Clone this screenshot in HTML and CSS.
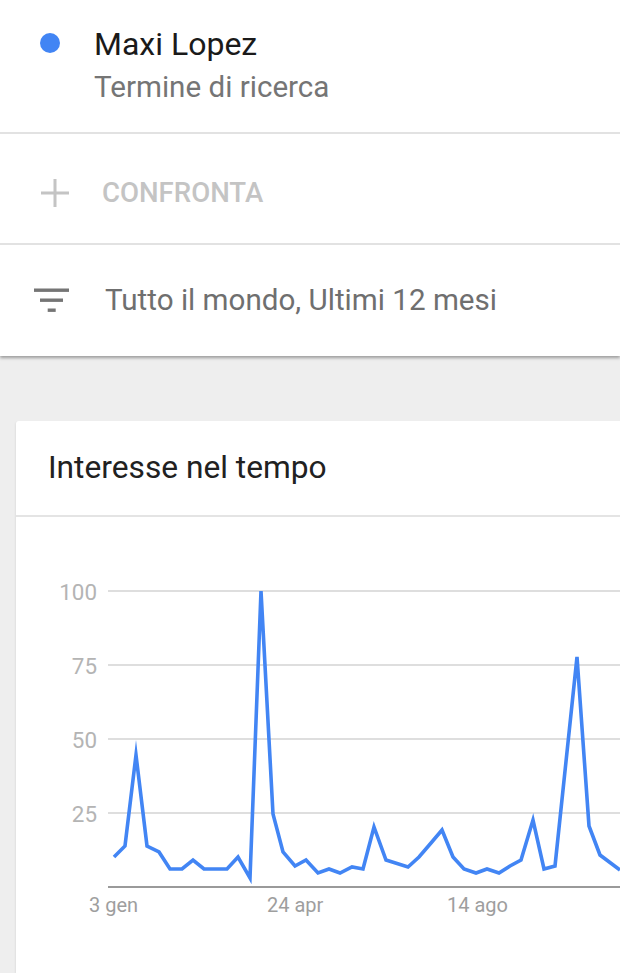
FILE: index.html
```html
<!DOCTYPE html>
<html lang="it">
<head>
<meta charset="utf-8">
<title>Maxi Lopez - Interesse nel tempo</title>
<link rel="stylesheet" href="styles.css">
</head>
<body>
<header class="panel">
  <div class="row term">
    <span class="dot"></span>
    <div class="term-text">
      <div class="term-name">Maxi Lopez</div>
      <div class="term-type">Termine di ricerca</div>
    </div>
  </div>
  <div class="row compare">
    <svg class="plus" width="28" height="28" viewBox="0 0 28 28"><rect x="12.5" y="0" width="3" height="28"/><rect x="0" y="12.5" width="28" height="3"/></svg>
    <span class="compare-label">CONFRONTA</span>
  </div>
  <div class="row filter">
    <svg class="filter-icon" width="36" height="24" viewBox="0 0 36 24"><rect x="0" y="0.5" width="35" height="3.4"/><rect x="6" y="10.5" width="23" height="3.4"/><rect x="13.7" y="20.5" width="8" height="3.4"/></svg>
    <span class="filter-label">Tutto il mondo, Ultimi 12 mesi</span>
  </div>
</header>
<main class="content">
  <section class="card">
    <h2 class="card-title">Interesse nel tempo</h2>
    <div class="chart">
      <svg class="chart-svg" width="604" height="456" viewBox="0 0 604 456">
        <g class="grid">
          <line x1="92" y1="74" x2="604" y2="74"/>
          <line x1="92" y1="148" x2="604" y2="148"/>
          <line x1="92" y1="222" x2="604" y2="222"/>
          <line x1="92" y1="296" x2="604" y2="296"/>
        </g>
        <line class="axis" x1="92" y1="370" x2="604" y2="370"/>
        <g class="ylabels">
          <text x="81" y="83">100</text>
          <text x="81" y="157">75</text>
          <text x="81" y="231">50</text>
          <text x="81" y="305">25</text>
        </g>
        <g class="xlabels">
          <text x="73" y="395">3 gen</text>
          <text x="251" y="395">24 apr</text>
          <text x="431" y="395">14 ago</text>
        </g>
        <polyline class="series" points="98,340 109,329 120,238 131,329 143,335 154,352 166,352 177,343 188,352 199,352 211,352 222,340 234,361 245,74 257,297 267,335 279,349 290,343 302,356 313,352 324,356 336,350 347,352 358,310 370,343 392,350 403,340 415,326 426,313 437,340 448,352 460,356 471,352 483,356 494,349 505,343 517,303 528,352 539,349 561,140 573,309 584,338 604,353"/>
      </svg>
    </div>
  </section>
</main>
</body>
</html>
```
FILE: styles.css
```css
html, body {
  margin: 0;
  padding: 0;
  overflow: hidden;
}
body {
  background: #eeeeee;
  font-family: Roboto, "Noto Sans", "Liberation Sans", sans-serif;
  width: 620px;
  height: 973px;
}
.panel {
  background: #ffffff;
  box-shadow: 0 2px 3px rgba(0, 0, 0, 0.35);
  position: relative;
  z-index: 1;
}
.row {
  display: flex;
  align-items: flex-start;
  box-sizing: border-box;
}
.term {
  height: 134px;
  padding-top: 24px;
  border-bottom: 2px solid #e2e2e2;
}
.dot {
  width: 20px;
  height: 20px;
  border-radius: 50%;
  background: #4285f4;
  margin-left: 40px;
  margin-top: 9px;
  flex: none;
}
.term-text {
  margin-left: 34px;
}
.term-name {
  font-size: 32px;
  line-height: 40px;
  color: #1a1a1a;
}
.term-type {
  font-size: 29.6px;
  line-height: 38px;
  margin-top: 4px;
  color: #757575;
}
.compare {
  height: 111px;
  padding-top: 43px;
  border-bottom: 2px solid #e2e2e2;
}
.plus {
  fill: #c4c4c4;
  margin-left: 41px;
  margin-top: 2px;
  flex: none;
}
.compare-label {
  margin-left: 33px;
  font-size: 27.6px;
  font-weight: 500;
  line-height: 32px;
  color: #c4c4c4;
}
.filter {
  height: 111px;
  padding-top: 37px;
}
.filter-icon {
  fill: #757575;
  margin-left: 34px;
  margin-top: 6px;
  flex: none;
}
.filter-label {
  margin-left: 35px;
  font-size: 29.6px;
  line-height: 36px;
  color: #6f6f6f;
}
.content {
  padding-top: 65px;
  padding-left: 16px;
}
.card {
  background: #ffffff;
  border-radius: 3px 0 0 0;
  width: 604px;
  box-shadow: -1px 1px 2px rgba(0, 0, 0, 0.06);
}
.card-title {
  margin: 0;
  font-weight: 400;
  font-size: 31.7px;
  line-height: 40px;
  color: #212121;
  padding: 27px 0 27px 32px;
  border-bottom: 2px solid #e4e4e4;
}
.chart {
  height: 456px;
}
.chart-svg {
  display: block;
}
.grid line {
  stroke: #dedede;
  stroke-width: 2;
}
.axis {
  stroke: #9a9a9a;
  stroke-width: 2;
}
.ylabels text {
  font-family: Roboto, "Liberation Sans", sans-serif;
  font-size: 22.4px;
  fill: #b4b4b4;
  text-anchor: end;
}
.xlabels text {
  font-family: Roboto, "Liberation Sans", sans-serif;
  font-size: 20px;
  fill: #9e9e9e;
}
.series {
  fill: none;
  stroke: #4285f4;
  stroke-width: 3.6;
  stroke-linejoin: miter;
  stroke-miterlimit: 10;
}
```
